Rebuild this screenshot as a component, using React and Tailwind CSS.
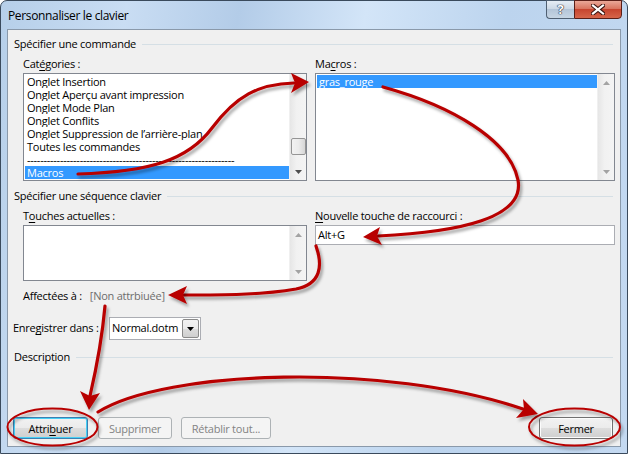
import React from "react";

const catItems = [
  "Onglet Insertion",
  "Onglet Aperçu avant impression",
  "Onglet Mode Plan",
  "Onglet Conflits",
  "Onglet Suppression de l’arrière-plan",
  "Toutes les commandes",
  "---------------------------------------------------------------",
];

function Tri({ up, light }) {
  return (
    <svg width="7" height="4" viewBox="0 0 7 4">
      <path d={up ? "M0 4 L3.5 0 L7 4 Z" : "M0 0 L7 0 L3.5 4 Z"} fill={light ? "#a3a3a3" : "#4d4d4d"} />
    </svg>
  );
}

function ScrollBar({ thumb, light }) {
  return (
    <div className="w-[17px] h-full shrink-0 flex flex-col items-center justify-between bg-[linear-gradient(90deg,#e6e6e6,#f1f1f1_40%,#f4f4f4)] border-l border-[#f0f0f0]">
      <div className="h-[17px] flex items-center justify-center">
        <Tri up light={light} />
      </div>
      {thumb && (
        <div className="w-[15px] h-[17px] mt-auto mb-[8px] rounded-[2px] border border-[#959595] bg-[linear-gradient(90deg,#f2f2f2,#ebebeb_50%,#d6d6d6)]" />
      )}
      <div className="h-[17px] flex items-center justify-center">
        <Tri light={light} />
      </div>
    </div>
  );
}

function GroupHead({ children, className = "" }) {
  return (
    <div className={"flex items-center h-[14px] pl-[6px] pr-[7px] " + className}>
      <span className="whitespace-nowrap leading-[14px]">{children}</span>
      <div className="flex-1 h-px bg-[#d5dfe5] ml-[6px]" />
    </div>
  );
}

function Btn({ children, w, variant }) {
  const base = "h-[22px] flex items-center justify-center rounded-[3px] border leading-none";
  if (variant === "disabled")
    return (
      <div className={`${base} ${w} border-[#adb2b5] bg-[#f4f4f4] text-[#838383]`}>{children}</div>
    );
  if (variant === "focus")
    return (
      <div className={`${base} ${w} border-[#3c7fb1] bg-[linear-gradient(#f2f2f2,#ebebeb_50%,#dddddd_50%,#cfcfcf)] shadow-[inset_0_0_0_1px_#48d0f5]`}>
        {children}
      </div>
    );
  return (
    <div className={`${base} ${w} border-[#707070] bg-[linear-gradient(#f2f2f2,#ebebeb_50%,#dddddd_50%,#cfcfcf)] shadow-[inset_0_0_0_1px_#fcfcfc]`}>
      {children}
    </div>
  );
}

function Overlay() {
  const red = "#b80000";
  return (
    <svg className="absolute left-0 top-0 pointer-events-none" width="628" height="454" viewBox="0 0 628 454">
      <defs>
        <filter id="sh" x="-10%" y="-10%" width="130%" height="130%">
          <feDropShadow dx="2" dy="3" stdDeviation="1.6" floodColor="#000" floodOpacity="0.35" />
        </filter>
      </defs>
      <g filter="url(#sh)" fill="none" stroke={red} strokeWidth="3.2" strokeLinecap="round">
        <path d="M78 174 C150 172 188 160 212 128 C236 96 258 84 294 83" />
        <path d="M383 87 C452 106 510 140 518 180 C525 218 460 232 378 236" />
        <path d="M316 246 C323 266 321 284 296 289 C262 295 222 295 184 295" />
        <path d="M105 306 C102 340 96 370 90 396" />
        <path d="M98 412 C165 370 385 362 523 409" />
        <ellipse cx="52.5" cy="427" rx="45" ry="18.5" strokeWidth="2" />
        <ellipse cx="574.5" cy="427" rx="45.5" ry="18.5" strokeWidth="2" />
      </g>
      <g filter="url(#sh)" fill={red}>
        <polygon points="309,82 291,73 295,83 291,93" />
        <polygon points="363,237 380,227 377,236 382,245" />
        <polygon points="168,295 187,286 183,295 187,304" />
        <polygon points="89,410 80,391 90,396 100,393" />
        <polygon points="538,414 523,399 524,409 516,418" />
      </g>
    </svg>
  );
}

export default function App() {
  return (
    <div className="relative w-[628px] h-[454px] overflow-hidden font-['Segoe_UI','Open_Sans',sans-serif] text-[11px] tracking-[-0.25px] text-black">
      <div className="w-full h-full flex flex-col rounded-t-[7px] border border-[#3a4a5c] bg-[linear-gradient(100deg,#b6cfe9_0%,#c9ddf3_18%,#b3cce8_34%,#d3e5f8_52%,#bcd4ee_72%,#c4d9f1_100%)]">
        {/* title bar */}
        <div className="h-[28px] flex items-start justify-between">
          <div className="pl-[7px] pt-[7px] text-[12px] leading-[15px] tracking-[-0.35px] text-black">Personnaliser le clavier</div>
          <div className="flex mr-[5px] -mt-px">
            <div className="w-[28px] h-[19px] flex items-center justify-center rounded-bl-[4px] border border-[#4f5f72] border-r-0 bg-[linear-gradient(#e6edf5,#cdd9e6_45%,#b4c5d8_50%,#c6d5e4)] text-white font-bold text-[13px] [text-shadow:0_0_1px_#223,0_0_1px_#223,0_0_1px_#223]">
              ?
            </div>
            <div className="w-[48px] h-[19px] flex items-center justify-center rounded-br-[4px] border border-[#5a1f18] bg-[linear-gradient(#eaa898,#d97560_45%,#c7452f_50%,#d6654a)]">
              <svg width="14" height="11" viewBox="0 0 14 11">
                <path d="M2 1.5 L12 9.5 M12 1.5 L2 9.5" stroke="#3b1410" strokeWidth="4.2" strokeLinecap="square" />
                <path d="M2 1.5 L12 9.5 M12 1.5 L2 9.5" stroke="#fff" strokeWidth="2.2" strokeLinecap="square" />
              </svg>
            </div>
          </div>
        </div>

        {/* client area */}
        <div className="mx-[6px] h-[418px] border border-[#8a99aa] bg-[#f0f0f0] flex flex-col">
          <GroupHead className="mt-[7px]">Spécifier une commande</GroupHead>

          <div className="mt-[6px] flex pl-[15px] gap-[8px]">
            <div className="w-[284px] shrink-0">
              <div className="h-[14px] leading-[14px]">
                Cat<span className="underline underline-offset-2">é</span>gories :
              </div>
              <div className="mt-[2px] h-[108px] border border-[#828790] bg-white flex">
                <div className="flex-1 min-w-0 pt-px pl-px">
                  {catItems.map((t) => (
                    <div key={t} className="h-[13px] leading-[13px] pl-[2px] whitespace-nowrap overflow-hidden">
                      {t}
                    </div>
                  ))}
                  <div className="h-[13px] leading-[13px] pl-[2px] bg-[#3399ff] text-white">Macros</div>
                </div>
                <ScrollBar thumb />
              </div>
            </div>
            <div className="w-[300px] shrink-0">
              <div className="h-[14px] leading-[14px]">
                Ma<span className="underline underline-offset-2">c</span>ros :
              </div>
              <div className="mt-[2px] h-[108px] border border-[#828790] bg-white flex">
                <div className="flex-1 pt-px pl-px">
                  <div className="h-[13px] leading-[13px] pl-[2px] bg-[#3399ff] text-white">gras_rouge</div>
                </div>
                <ScrollBar light />
              </div>
            </div>
          </div>

          <GroupHead className="mt-[8px]">Spécifier une séquence clavier</GroupHead>

          <div className="mt-[6px] flex pl-[15px] gap-[8px]">
            <div className="w-[284px] shrink-0">
              <div className="h-[14px] leading-[14px]">
                T<span className="underline underline-offset-2">o</span>uches actuelles :
              </div>
              <div className="mt-[2px] h-[56px] border border-[#828790] bg-white flex justify-end">
                <ScrollBar light />
              </div>
            </div>
            <div className="w-[300px] shrink-0">
              <div className="h-[14px] leading-[14px]">
                <span className="underline underline-offset-2">N</span>ouvelle touche de raccourci :
              </div>
              <div className="mt-[2px] h-[20px] border border-[#abadb3] bg-white pl-[2px] leading-[18px]">Alt+G</div>
            </div>
          </div>

          <div className="mt-[8px] pl-[15px] h-[14px] leading-[14px] flex">
            <span>Affectées à :</span>
            <span className="ml-[8px] text-[#6d6d6d]">[Non attrbiuée]</span>
          </div>

          <div className="mt-[14px] pl-[5px] flex items-center h-[23px]">
            <span className="w-[96px] shrink-0 whitespace-nowrap">
              Enre<span className="underline underline-offset-2">g</span>istrer dans :
            </span>
            <div className="w-[92px] h-[23px] border border-[#abadb3] bg-white flex items-center justify-between pl-[2px] pr-px">
              <span>Normal.dotm</span>
              <div className="w-[17px] h-[19px] rounded-[2px] border border-[#8a8a8a] bg-[linear-gradient(#f2f2f2,#ebebeb_50%,#dddddd_50%,#cfcfcf)] flex items-center justify-center">
                <svg width="7" height="4" viewBox="0 0 7 4">
                  <path d="M0 0 L7 0 L3.5 4 Z" fill="#000" />
                </svg>
              </div>
            </div>
          </div>

          <GroupHead className="mt-[10px]">Description</GroupHead>

          <div className="mt-auto mb-[7px] flex pl-[5px] pr-[7px]">
            <Btn w="w-[75px]" variant="focus">
              Attri<span className="underline underline-offset-2">b</span>uer
            </Btn>
            <div className="ml-[10px]">
              <Btn w="w-[74px]" variant="disabled">Supprimer</Btn>
            </div>
            <div className="ml-[9px]">
              <Btn w="w-[90px]" variant="disabled">Rétablir tout...</Btn>
            </div>
            <div className="ml-auto">
              <Btn w="w-[74px]">Fermer</Btn>
            </div>
          </div>
        </div>
      </div>
      <Overlay />
    </div>
  );
}
